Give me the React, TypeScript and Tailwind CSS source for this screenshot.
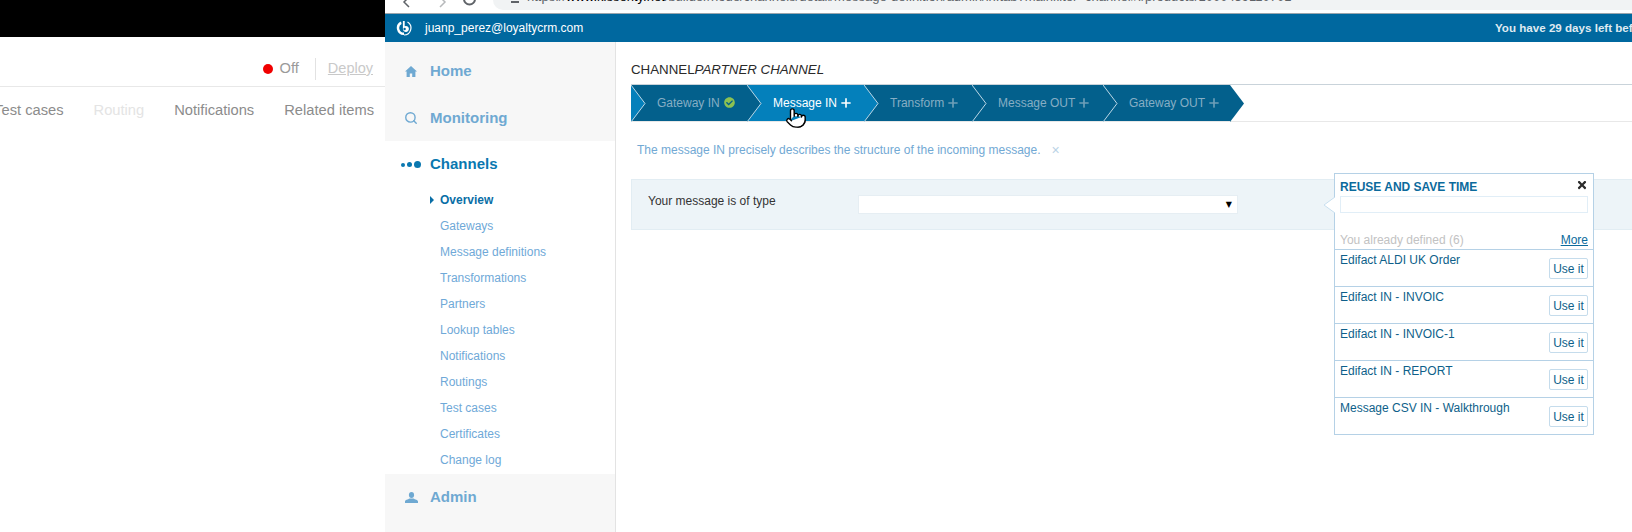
import React from 'react';
import { Plus, Search, Pointer } from 'lucide-react';
import { FaCheckCircle, FaTimes } from 'react-icons/fa';

const subItems = [
  'Overview',
  'Gateways',
  'Message definitions',
  'Transformations',
  'Partners',
  'Lookup tables',
  'Notifications',
  'Routings',
  'Test cases',
  'Certificates',
  'Change log',
];

const steps = [
  { name: 'Gateway IN', width: 'w-[116px]', done: true, prev: '#0480bb' },
  { name: 'Message IN', width: 'w-[117px]', active: true, prev: '#03608c' },
  { name: 'Transform', width: 'w-[108px]', prev: '#0480bb' },
  { name: 'Message OUT', width: 'w-[131px]', prev: '#03608c' },
  { name: 'Gateway OUT', width: 'w-[127px]', prev: '#03608c' },
];

const reuseItems = [
  'Edifact ALDI UK Order',
  'Edifact IN - INVOIC',
  'Edifact IN - INVOIC-1',
  'Edifact IN - REPORT',
  'Message CSV IN - Walkthrough',
];

function Logo() {
  return (
    <svg width="16" height="16" viewBox="0 0 16 16" className="shrink-0">
      {/* media luna gruesa a la izquierda, arco fino a la derecha */}
      <path d="M5 1.6 A7 7 0 0 0 8 15 L8 12.6 A4.6 4.6 0 0 1 5.6 4 Z" fill="#fff" />
      <path d="M8 15 A7 7 0 0 0 11.5 2" fill="none" stroke="#fff" strokeWidth="1.2" />
      <path d="M6.9 1 H8.7 V6.2 A3 3 0 1 1 6.9 9 Z" fill="#fff" />
      <circle cx="8.6" cy="9" r="1.2" fill="#00689f" />
    </svg>
  );
}

function HomeIcon() {
  return (
    <svg width="12" height="11" viewBox="0 0 12 11" className="ml-[20px] shrink-0" fill="#6fa9d2">
      <path d="M6 0 L12 5.6 H10.4 V11 H7.2 V7.4 H4.8 V11 H1.6 V5.6 H0 Z" />
    </svg>
  );
}

function UserIcon() {
  return (
    <svg width="13" height="11" viewBox="0 0 13 11" className="ml-[20px] shrink-0" fill="#6fa9d2">
      <ellipse cx="6.5" cy="3" rx="2.6" ry="3" />
      <path d="M0 11 V9.6 C0 8 3 7.6 4.6 6.6 H8.4 C10 7.6 13 8 13 9.6 V11 Z" />
    </svg>
  );
}

function Step({ step }: { step: (typeof steps)[number] }) {
  return (
    <div className={`relative flex h-full items-center pb-[1px] pl-[26px] ${step.width} ${step.active ? 'bg-[#0480bb]' : 'bg-[#03608c]'}`}>
      {/* muesca de la flecha */}
      <svg width="15" height="37" viewBox="0 0 15 37" className="absolute left-0 top-0">
        <polygon points="0,0 14,18.5 0,37" fill={step.prev} />
        <polyline points="0,0 14,18.5 0,37" fill="none" stroke="#bcd7e6" strokeWidth="1" />
      </svg>
      <span className={`text-[12px] ${step.active ? 'text-white' : 'text-[#86aec4]'}`}>{step.name}</span>
      {step.done ? (
        <FaCheckCircle size={11} className="ml-[4px] text-[#8cc152]" />
      ) : (
        <Plus size={14} strokeWidth={2.8} className={`ml-[2px] ${step.active ? 'text-white' : 'text-[#6f9fb8]'}`} />
      )}
    </div>
  );
}

function ReusePopover() {
  return (
    <div className="absolute left-[1334px] top-[173px] h-[262px] w-[260px] border border-[#b5d1e6] bg-white">
      {/* flechita hacia la izquierda */}
      <svg width="11" height="16" viewBox="0 0 11 16" className="absolute left-[-11px] top-[23px]">
        <polygon points="11,0 0,8 11,16" fill="#fff" />
        <polyline points="11,0 0,8 11,16" fill="none" stroke="#c8dfef" />
      </svg>
      <div className="flex h-[22px] items-center justify-between pl-[5px] pr-[5px] pt-[4px]">
        <span className="text-[12px] font-bold text-[#0b6a9c]">REUSE AND SAVE TIME</span>
        <FaTimes size={12} className="-mt-[5px] text-[#2b2b2b]" />
      </div>
      <div className="mx-[5px] h-[17px] border border-[#e1eef7] bg-white" />
      <div className="mt-[17px] flex h-[19px] items-center justify-between px-[5px]">
        <span className="text-[12px] text-[#c2c2c2]">You already defined (6)</span>
        <span className="text-[12px] text-[#0b6a9c] underline">More</span>
      </div>
      {reuseItems.map((item) => (
        <div key={item} className="flex h-[37px] items-start justify-between border-t border-[#b5d1e6] pl-[5px] pr-[5px]">
          <span className="mt-[2px] text-[12px] leading-[16px] text-[#0e5f8a]">{item}</span>
          <button className="mt-[8px] h-[21px] w-[39px] rounded-[2px] border border-[#c5dcec] bg-white text-[12px] text-[#0e5f8a]">
            Use it
          </button>
        </div>
      ))}
    </div>
  );
}

export default function App() {
  return (
    <div className="relative flex h-[532px] w-[1632px] overflow-hidden bg-white font-['Liberation_Sans',Arial,sans-serif]">
      {/* PANEL IZQUIERDO */}
      <div className="flex w-[385px] shrink-0 flex-col">
        <div className="h-[37px] bg-black" />
        <div className="flex h-[50px] items-center justify-end border-b border-[#e8e8e8] pr-[12px] pt-[14px]">
          <span className="h-[10px] w-[10px] rounded-full bg-[#f00000]" />
          <span className="ml-[7px] text-[14.7px] text-[#9a9a9a]">Off</span>
          <span className="ml-[16px] h-[22px] w-px bg-[#e2e2e2]" />
          <span className="ml-[12px] text-[14.5px] text-[#c9c9c9] underline">Deploy</span>
        </div>
        <div className="flex h-[46px] items-center justify-end gap-[30px] overflow-hidden whitespace-nowrap pr-[11px] text-[14.7px] text-[#8c8c8c]">
          <span>Test cases</span>
          <span className="text-[#e4e4e4]">Routing</span>
          <span>Notifications</span>
          <span>Related items</span>
        </div>
      </div>

      {/* VENTANA DERECHA */}
      <div className="flex min-w-0 flex-1 flex-col">
        {/* barra del navegador, cortada arriba */}
        <div className="relative h-[14px] overflow-hidden border-b border-[#9aa5ad] bg-white pl-[108px]">
          <svg width="100" height="13" viewBox="0 0 100 13" className="absolute left-0 top-0" fill="none" stroke="#5f6368" strokeWidth="1.5">
            <path d="M24 -3 L19 2 L24 7" />
            <path d="M55 -3 L60 2 L55 7" opacity="0.45" />
            <path d="M79 -1 A5.5 5.5 0 0 0 90 -1" strokeWidth="2" />
          </svg>
          <div className="h-[10px] overflow-hidden rounded-bl-[10px] bg-[#f1f3f4] pl-[18px]">
            <div className="flex items-start">
              <span className="mt-[1px] h-[2px] w-[8px] shrink-0 bg-[#5f6368]" />
              <div className="-mt-[11px] ml-[8px] whitespace-nowrap text-[13px] leading-[15px] text-[#5f6368]">
                https://<span className="text-black">www.kissenty.net</span>/builder/node/channels/detail/message-definition/admin/in.tab?mainfilter=channel#!/products/1000439110701
              </div>
            </div>
          </div>
        </div>

        {/* barra azul */}
        <div className="flex h-[28px] items-center bg-[#00689f] pl-[11px] text-[12px] text-white">
          <Logo />
          <span className="ml-[13px]">juanp_perez@loyaltycrm.com</span>
          <div className="ml-auto w-[137px] overflow-hidden whitespace-nowrap text-[11.6px] font-bold text-[#dfeaf1]">
            You have 29 days left before your trial ends
          </div>
        </div>

        <div className="flex min-h-0 flex-1">
          {/* SIDEBAR */}
          <aside className="flex w-[231px] shrink-0 flex-col border-r border-[#e3e3e3] bg-[#f7f7f7]">
            <div className="h-[99px] pt-[6px] text-[15px] font-bold text-[#6fa9d2]">
              <div className="flex h-[47px] items-center">
                <HomeIcon />
                <span className="ml-[13px]">Home</span>
              </div>
              <div className="flex h-[46px] items-center">
                <Search size={14} strokeWidth={2.4} className="ml-[19px] text-[#6fa9d2]" />
                <span className="ml-[12px]">Monitoring</span>
              </div>
            </div>
            <div className="bg-white pb-px">
              <div className="flex h-[46px] items-center pt-[1px] text-[15px] font-bold text-[#0a78b0]">
                <span className="ml-[16px] h-[4px] w-[4px] rounded-full bg-[#0a78b0]" />
                <span className="ml-[2px] h-[5px] w-[5px] rounded-full bg-[#0a78b0]" />
                <span className="ml-[2px] h-[7px] w-[7px] rounded-full bg-[#0a78b0]" />
                <span className="ml-[9px]">Channels</span>
              </div>
              {subItems.map((item, i) => (
                <div key={item} className="relative flex h-[26px] items-center pl-[55px] text-[12px]">
                  {i === 0 && (
                    <span className="absolute left-[45px] h-0 w-0 border-y-[4px] border-l-[4px] border-y-transparent border-l-[#0a6ea6]" />
                  )}
                  <span className={i === 0 ? 'font-bold text-[#0a6ea6]' : 'text-[#6fa9d8]'}>{item}</span>
                </div>
              ))}
            </div>
            <div className="flex h-[46px] items-center text-[15px] font-bold text-[#6fa9d2]">
              <UserIcon />
              <span className="ml-[12px]">Admin</span>
            </div>
          </aside>

          {/* CONTENIDO */}
          <main className="min-w-0 flex-1 pl-[15px]">
            <h1 className="pt-[20px] text-[13.3px] font-normal leading-[16px] text-[#2a2a2a]">
              CHANNEL<em>PARTNER CHANNEL</em>
            </h1>
            <div className="mt-[6px] flex h-[38px] border-t border-b border-t-[#c9d3da] border-b-[#e8e8e8]">
              {steps.map((step) => (
                <Step key={step.name} step={step} />
              ))}
              <svg width="14" height="37" viewBox="0 0 14 37" className="shrink-0">
                <polygon points="0,0 14,18.5 0,37" fill="#03608c" />
              </svg>
            </div>
            <div className="mt-[19px] flex h-[18px] items-center pl-[6px] text-[12px] text-[#72a9d4]">
              The message IN precisely describes the structure of the incoming message.
              <span className="ml-[11px] text-[14px] leading-none text-[#b9d3e6]">×</span>
            </div>
            <div className="mt-[20px] flex h-[51px] items-start border border-r-0 border-[#e2edf3] bg-[#edf4f8] pl-[16px] pt-[14px]">
              <span className="w-[210px] text-[12px] leading-[15px] text-[#333]">Your message is of type</span>
              <div className="mt-[1px] flex h-[19px] w-[380px] items-center justify-end border border-[#e6eef3] bg-white pr-[5px]">
                <span className="font-['DejaVu_Sans',sans-serif] text-[8px] text-black">▼</span>
              </div>
            </div>
          </main>
        </div>
      </div>

      {/* cosas encima */}
      <ReusePopover />
      <Pointer size={22} strokeWidth={1.5} className="absolute left-[785px] top-[107px] fill-white text-black" />
    </div>
  );
}
